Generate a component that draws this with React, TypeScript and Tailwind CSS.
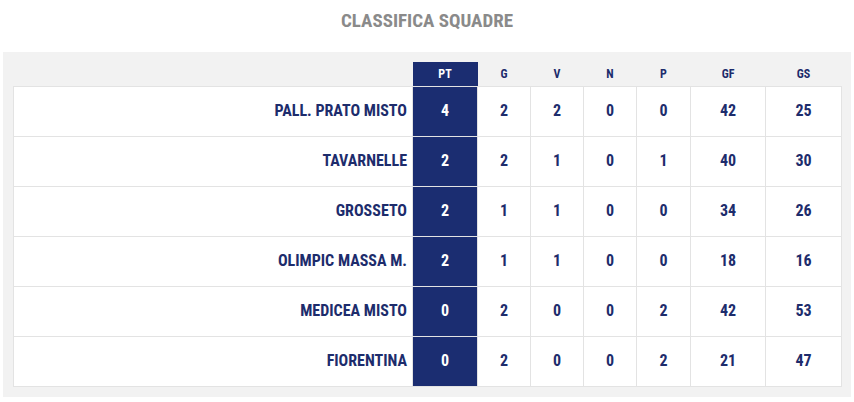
const rows = [
  { team: "PALL. PRATO MISTO", pt: 4, g: 2, v: 2, n: 0, p: 0, gf: 42, gs: 25 },
  { team: "TAVARNELLE", pt: 2, g: 2, v: 1, n: 0, p: 1, gf: 40, gs: 30 },
  { team: "GROSSETO", pt: 2, g: 1, v: 1, n: 0, p: 0, gf: 34, gs: 26 },
  { team: "OLIMPIC MASSA M.", pt: 2, g: 1, v: 1, n: 0, p: 0, gf: 18, gs: 16 },
  { team: "MEDICEA MISTO", pt: 0, g: 2, v: 0, n: 0, p: 2, gf: 42, gs: 53 },
  { team: "FIORENTINA", pt: 0, g: 2, v: 0, n: 0, p: 2, gf: 21, gs: 47 },
];

const cols = ["G", "V", "N", "P", "GF", "GS"] as const;

export default function App() {
  return (
    <div className="w-[854px] h-[402px] bg-white font-['Roboto_Condensed','Liberation_Sans_Narrow','DejaVu_Sans_Condensed',Roboto,sans-serif] [font-stretch:condensed] font-bold text-[#1d2c6c]">
      <div className="h-[42px] flex items-center justify-center text-[19px] text-[#8a8a8a]">
        CLASSIFICA SQUADRE
      </div>
      <div className="mt-[10px] mx-[3px] bg-[#f2f2f2] px-[10px] pt-[10px] pb-[10px]">
        <table className="border-collapse table-fixed w-[828px]">
          <colgroup>
            <col className="w-[399px]" />
            <col className="w-[65px]" />
            <col className="w-[53px]" />
            <col className="w-[53px]" />
            <col className="w-[53px]" />
            <col className="w-[54px]" />
            <col className="w-[75px]" />
            <col className="w-[76px]" />
          </colgroup>
          <thead>
            <tr className="h-[24px] text-[12px]">
              <th></th>
              <th className="bg-[#1b2d71] text-white font-bold">PT</th>
              {cols.map((c) => (
                <th key={c} className="font-bold">
                  {c}
                </th>
              ))}
            </tr>
          </thead>
          <tbody>
            {rows.map((r) => (
              <tr key={r.team} className="h-[50px] bg-white text-[16px]">
                <td className="border border-[#e3e3e3] text-right pr-[5px]">{r.team}</td>
                <td className="border border-[#e3e3e3] bg-[#1b2d71] text-white text-center">{r.pt}</td>
                <td className="border border-[#e3e3e3] text-center">{r.g}</td>
                <td className="border border-[#e3e3e3] text-center">{r.v}</td>
                <td className="border border-[#e3e3e3] text-center">{r.n}</td>
                <td className="border border-[#e3e3e3] text-center">{r.p}</td>
                <td className="border border-[#e3e3e3] text-center">{r.gf}</td>
                <td className="border border-[#e3e3e3] text-center">{r.gs}</td>
              </tr>
            ))}
          </tbody>
        </table>
      </div>
    </div>
  );
}
